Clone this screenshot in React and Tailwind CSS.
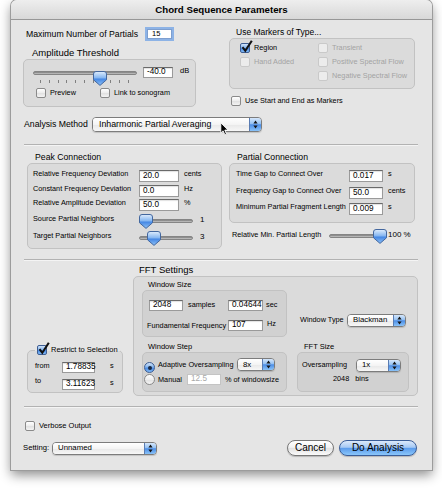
import React from 'react';

const box = 'rounded-[5px] border border-[#c2c2c2] bg-[rgba(0,0,0,0.045)]';
const small = 'text-[7.3px] leading-none whitespace-nowrap';

function Check({ on, dis }) {
  return (
    <span
      className={`relative inline-block w-[10px] h-[10px] shrink-0 rounded-[2px] border ${
        dis
          ? 'border-[#c9c9c9] bg-[#ececec]'
          : on
          ? 'border-[#3d5d92] bg-[linear-gradient(to_bottom,#d2e4fa,#86b6ef_45%,#4b8be4_55%,#7fb8f4)]'
          : 'border-[#8a8a8a] bg-[linear-gradient(to_bottom,#ffffff,#ececec_50%,#e0e0e0_51%,#f4f4f4)]'
      }`}
    >
      {on && (
        <svg className="absolute -top-[4px] left-[0px]" width="12" height="13" viewBox="0 0 12 13">
          <path d="M1.5 7.2 L4.3 10.8 L10.8 0.8" fill="none" stroke="#111" strokeWidth="2.1" />
        </svg>
      )}
    </span>
  );
}

function Radio({ on }) {
  return (
    <span
      className={`inline-flex items-center justify-center w-[11px] h-[11px] shrink-0 rounded-full border ${
        on
          ? 'border-[#3d5d92] bg-[linear-gradient(to_bottom,#d2e4fa,#86b6ef_45%,#4b8be4_55%,#7fb8f4)]'
          : 'border-[#8a8a8a] bg-[linear-gradient(to_bottom,#ffffff,#ececec_50%,#e0e0e0_51%,#f4f4f4)]'
      }`}
    >
      {on && <span className="w-[4px] h-[4px] rounded-full bg-[#1b2a44]" />}
    </span>
  );
}

function Field({ v, w, h, dis }) {
  return (
    <div
      className={`${w} ${h || 'h-[11px]'} shrink-0 flex items-center pl-[3px] bg-white border text-[8.2px] leading-none ${
        dis ? 'border-[#c4c4c4] text-[#a9a9a9]' : 'border-[#9a9a9a] border-t-[#6a6a6a] text-black shadow-[inset_0_1px_1px_rgba(0,0,0,0.12)]'
      }`}
    >
      {v}
    </div>
  );
}

function Popup({ w, label, tall }) {
  return (
    <div
      className={`${w} ${tall ? 'h-[15px]' : 'h-[13px]'} shrink-0 flex rounded-[4px] border border-[#7c7c7c] overflow-hidden shadow-[0_1px_1px_rgba(0,0,0,0.15)]`}
    >
      <div
        className={`flex-1 flex items-center leading-none bg-[linear-gradient(to_bottom,#ffffff,#f4f4f4_50%,#e8e8e8_51%,#f7f7f7)] ${
          tall ? 'pl-[6px] text-[8.8px]' : 'pl-[5px] text-[7.8px]'
        }`}
      >
        {label}
      </div>
      <div className="w-[12px] flex items-center justify-center border-l border-[#5a7cb2] bg-[linear-gradient(to_bottom,#d6e7fb,#92c0f3_45%,#4c8de6_52%,#8ac3f8)]">
        <svg width="5" height="9" viewBox="0 0 5 9">
          <path d="M2.5 0.6L4.6 3.5H0.4Z M2.5 8.4L4.6 5.5H0.4Z" fill="#151515" />
        </svg>
      </div>
    </div>
  );
}

function Thumb({ pos }) {
  return (
    <svg className={`absolute top-0 ${pos}`} width="14" height="15" viewBox="0 0 14 15">
      <defs>
        <linearGradient id="thumbG" x1="0" y1="0" x2="0" y2="1">
          <stop offset="0" stopColor="#e0edfc" />
          <stop offset="0.45" stopColor="#86b7f1" />
          <stop offset="0.55" stopColor="#4688e4" />
          <stop offset="1" stopColor="#8fc2f6" />
        </linearGradient>
      </defs>
      <path d="M3 0.5 H11 Q13.5 0.5 13.5 3 V8.8 L7 14.4 L0.5 8.8 V3 Q0.5 0.5 3 0.5Z" fill="url(#thumbG)" stroke="#43679e" />
    </svg>
  );
}

function Slider({ w, pos }) {
  return (
    <div className={`relative ${w} h-[15px] shrink-0`}>
      <div className="mt-[5px] h-[4px] rounded-full border border-[#858585] bg-[linear-gradient(to_bottom,#7a7a7a,#c9c9c9)]" />
      <Thumb pos={pos} />
    </div>
  );
}

function CheckRow({ label, on, dis, text }) {
  return (
    <div className="flex items-center h-full">
      <Check on={on} dis={dis} />
      <span className={`ml-[4px] ${text || 'text-[7.3px]'} leading-none whitespace-nowrap ${dis ? 'text-[#a3a3a3]' : 'text-black'}`}>{label}</span>
    </div>
  );
}

function Sep({ mt }) {
  return <div className={`${mt} ml-[13px] w-[394px] h-[2px] border-t border-t-[#b2b2b2] border-b border-b-[#f4f4f4]`} />;
}

function FieldRow({ label, v, unit, lw, fw, h }) {
  return (
    <div className={`${h} flex items-center`}>
      <span className={`${lw} ${small} mb-[5px]`}>{label}</span>
      <Field v={v} w={fw} h="h-[12px]" />
      <span className={`ml-[5px] ${small} mb-[5px]`}>{unit}</span>
    </div>
  );
}

export default function App() {
  return (
    <div className="w-[442px] h-[488px] bg-white overflow-hidden font-['Liberation_Sans',Arial,sans-serif] text-black">
      <div className="ml-[11px] w-[421px] h-[470px] flex flex-col bg-[#e5e5e5] rounded-t-[6px] shadow-[0_0_0_1px_#9c9c9c,0_5px_12px_rgba(0,0,0,0.45)]">
        {/* title */}
        <div className="h-[20px] shrink-0 rounded-t-[6px] bg-[linear-gradient(to_bottom,#eeeeee,#d8d8d8)] border-b border-[#979797] flex items-center justify-center text-[9.7px] font-bold leading-none">
          Chord Sequence Parameters
        </div>

        {/* top section */}
        <div className="h-[97px] shrink-0 flex">
          <div className="ml-[12px] w-[173px] flex flex-col">
            <div className="mt-[7px] h-[14px] flex items-center">
              <span className="ml-[3px] w-[121px] text-[8.7px] leading-none">Maximum Number of Partials</span>
              <div className="w-[25px] h-[10px] flex items-center pl-[4px] bg-white border border-[#7e9fcf] ring-2 ring-[#8db3e6] text-[7.5px] leading-none">15</div>
            </div>
            <div className="mt-[6px] h-[12px] flex items-center pl-[9px] text-[9.5px] leading-none">Amplitude Threshold</div>
            <div className={`h-[48px] ${box} flex flex-col pt-[6px]`}>
              <div className="h-[14px] flex items-start">
                <div className="ml-[9px]">
                  <Slider w="w-[104px]" pos="left-[60px]" />
                </div>
                <div className="ml-[6px] mt-[1px]">
                  <Field v="-40.0" w="w-[30px]" />
                </div>
                <span className="ml-[7px] mt-[1px] text-[7.5px] leading-none">dB</span>
              </div>
              <div className="h-[3px] ml-[16px] w-[89px] flex justify-between">
                {Array.from({ length: 11 }).map((_, i) => (
                  <span key={i} className="w-px h-[3px] bg-[#808080]" />
                ))}
              </div>
              <div className="mt-[4px] h-[11px] flex">
                <div className="ml-[12px] w-[64px]">
                  <CheckRow label="Preview" />
                </div>
                <CheckRow label="Link to sonogram" />
              </div>
            </div>
          </div>

          <div className="ml-[33px] w-[186px] flex flex-col">
            <div className="mt-[7px] h-[11px] flex items-center pl-[7px] text-[8.5px] leading-none">Use Markers of Type...</div>
            <div className={`h-[51px] ${box} flex pt-[2px]`}>
              <div className="ml-[10px] w-[78px] flex flex-col">
                <div className="h-[14px]">
                  <CheckRow label="Region" on />
                </div>
                <div className="h-[14px]">
                  <CheckRow label="Hand Added" dis />
                </div>
              </div>
              <div className="flex flex-col">
                <div className="h-[14px]">
                  <CheckRow label="Transient" dis />
                </div>
                <div className="h-[14px]">
                  <CheckRow label="Positive Spectral Flow" dis />
                </div>
                <div className="h-[14px]">
                  <CheckRow label="Negative Spectral Flow" dis />
                </div>
              </div>
            </div>
            <div className="mt-[6px] h-[11px] ml-[2px]">
              <CheckRow label="Use Start and End as Markers" />
            </div>
          </div>
        </div>

        {/* analysis method */}
        <div className="h-[14px] shrink-0 flex items-center">
          <span className="ml-[13px] w-[68px] text-[8.7px] leading-none">Analysis Method</span>
          <div className="relative">
            <Popup w="w-[170px]" label="Inharmonic Partial Averaging" tall />
            <svg className="absolute left-[128px] top-[5px]" width="9" height="14" viewBox="0 0 9 14">
              <path d="M0.8 0.8V11L3.1 8.8L4.9 12.9L6.5 12.2L4.8 8.1H8Z" fill="#000" stroke="#fff" strokeWidth="0.9" />
            </svg>
          </div>
        </div>

        <Sep mt="mt-[13px]" />

        {/* peak / partial connection */}
        <div className="mt-[6px] shrink-0 flex">
          <div className="ml-[16px] w-[195px] flex flex-col">
            <div className="h-[11px] flex items-center pl-[8px] text-[8.7px] leading-none">Peak Connection</div>
            <div className={`h-[86px] ${box} pt-[5px] flex flex-col`}>
              <FieldRow h="h-[14.5px]" lw="w-[111px] pl-[5px]" fw="w-[40px]" label="Relative Frequency Deviation" v="20.0" unit="cents" />
              <FieldRow h="h-[14.5px]" lw="w-[111px] pl-[5px]" fw="w-[40px]" label="Constant Frequency Deviation" v="0.0" unit="Hz" />
              <FieldRow h="h-[14.5px]" lw="w-[111px] pl-[5px]" fw="w-[40px]" label="Relative Amplitude Deviation" v="50.0" unit="%" />
              <div className="h-[17px] flex items-center">
                <span className={`w-[111px] pl-[5px] ${small} mb-[4px]`}>Source Partial Neighbors</span>
                <Slider w="w-[54px]" pos="left-[0px]" />
                <span className="ml-[7px] text-[8px] leading-none mb-[2px]">1</span>
              </div>
              <div className="h-[17px] flex items-center">
                <span className={`w-[111px] pl-[5px] ${small} mb-[4px]`}>Target Partial Neighbors</span>
                <Slider w="w-[54px]" pos="left-[8px]" />
                <span className="ml-[7px] text-[8px] leading-none mb-[2px]">3</span>
              </div>
            </div>
          </div>

          <div className="ml-[7px] w-[186px] flex flex-col">
            <div className="h-[11px] flex items-center pl-[8px] text-[8.7px] leading-none">Partial Connection</div>
            <div className={`h-[60px] ${box} pt-[4px] flex flex-col`}>
              <FieldRow h="h-[16.5px]" lw="w-[119px] pl-[6px]" fw="w-[34px]" label="Time Gap to Connect Over" v="0.017" unit="s" />
              <FieldRow h="h-[16.5px]" lw="w-[119px] pl-[6px]" fw="w-[34px]" label="Frequency Gap to Connect Over" v="50.0" unit="cents" />
              <FieldRow h="h-[16.5px]" lw="w-[119px] pl-[6px]" fw="w-[34px]" label="Minimum Partial Fragment Length" v="0.009" unit="s" />
            </div>
            <div className="mt-[5px] h-[17px] flex items-center">
              <span className={`w-[100px] pl-[3px] ${small} mb-[3px]`}>Relative Min. Partial Length</span>
              <Slider w="w-[57px]" pos="left-[44px]" />
              <span className="ml-[2px] text-[8px] leading-none mb-[3px] whitespace-nowrap">100 %</span>
            </div>
          </div>
        </div>

        <Sep mt="mt-[10px]" />

        {/* FFT + restrict */}
        <div className="shrink-0 flex">
          <div className="ml-[16px] w-[96px]">
            <div className={`relative mt-[89px] h-[43px] ${box} pt-[10px] flex flex-col`}>
              <div className="absolute -top-[7px] left-[7px] h-[12px] px-[2px] bg-[linear-gradient(to_bottom,#e5e5e5_55%,transparent_55%)]">
                <CheckRow label="Restrict to Selection" on text="text-[7.5px]" />
              </div>
              <div className="h-[12px] flex items-center">
                <span className={`w-[34px] pl-[7px] ${small} mb-[3px]`}>from</span>
                <Field v="1.78835" w="w-[33px]" />
                <span className={`ml-[15px] ${small} mb-[3px]`}>s</span>
              </div>
              <div className="mt-[5px] h-[12px] flex items-center">
                <span className={`w-[34px] pl-[7px] ${small} mb-[6px]`}>to</span>
                <Field v="3.11623" w="w-[33px]" />
                <span className={`ml-[15px] ${small} mb-[3px]`}>s</span>
              </div>
            </div>
          </div>

          <div className="ml-[10px] w-[285px] flex flex-col">
            <div className="mt-[3px] h-[12px] flex items-center pl-[6px] text-[9.5px] leading-none">FFT Settings</div>
            <div className={`h-[120px] ${box} flex`}>
              <div className="ml-[8px] w-[145px] flex flex-col">
                <div className="mt-[2px] h-[11px] flex items-center pl-[6px] text-[7.5px] leading-none">Window Size</div>
                <div className={`h-[47px] ${box} pt-[8px] flex flex-col`}>
                  <div className="h-[13px] flex items-center">
                    <div className="ml-[6px]">
                      <Field v="2048" w="w-[34px]" />
                    </div>
                    <span className={`w-[45px] pl-[5px] ${small} mb-[2px]`}>samples</span>
                    <Field v="0.04644" w="w-[35px]" />
                    <span className={`pl-[3px] ${small} mb-[2px]`}>sec</span>
                  </div>
                  <div className="mt-[7px] h-[13px] flex items-center">
                    <span className={`w-[85px] pl-[4px] ${small}`}>Fundamental Frequency</span>
                    <Field v="107" w="w-[35px]" />
                    <span className={`pl-[4px] ${small} mb-[4px]`}>Hz</span>
                  </div>
                </div>
                <div className="mt-[4px] h-[11px] flex items-center pl-[6px] text-[7.5px] leading-none">Window Step</div>
                <div className={`h-[40px] ${box} pt-[5px] flex flex-col`}>
                  <div className="h-[13px] flex items-center">
                    <div className="ml-[1px]">
                      <Radio on />
                    </div>
                    <span className={`ml-[3px] w-[79px] ${small}`}>Adaptive Oversampling</span>
                    <Popup w="w-[38px]" label="8x" />
                  </div>
                  <div className="mt-[2px] h-[13px] flex items-center">
                    <div className="ml-[1px]">
                      <Radio />
                    </div>
                    <span className={`ml-[3px] w-[29px] ${small}`}>Manual</span>
                    <Field v="12.5" w="w-[34px]" dis />
                    <span className={`pl-[4px] ${small}`}>% of windowsize</span>
                  </div>
                </div>
              </div>

              <div className="ml-[10px] w-[112px] flex flex-col">
                <div className="mt-[35px] h-[16px] flex items-center">
                  <span className={`w-[50px] pl-[3px] ${small}`}>Window Type</span>
                  <Popup w="w-[59px]" label="Blackman" />
                </div>
                <div className="mt-[13px] h-[11px] flex items-center pl-[7px] text-[7.5px] leading-none">FFT Size</div>
                <div className={`h-[40px] ${box} pt-[6px] flex flex-col`}>
                  <div className="h-[12px] flex items-center">
                    <span className={`w-[58px] pl-[4px] ${small}`}>Oversampling</span>
                    <Popup w="w-[45px]" label="1x" />
                  </div>
                  <div className="mt-[2px] h-[12px] flex items-center pl-[35px] gap-[6px]">
                    <span className={small}>2048</span>
                    <span className={small}>bins</span>
                  </div>
                </div>
              </div>
            </div>
          </div>
        </div>

        <Sep mt="mt-[10px]" />

        <div className="mt-[12px] h-[11px] shrink-0 ml-[14px]">
          <CheckRow label="Verbose Output" text="text-[7.5px]" />
        </div>

        <div className="mt-[9px] h-[16px] shrink-0 flex items-center">
          <span className="ml-[12px] w-[29px] text-[7.7px] leading-none">Setting:</span>
          <Popup w="w-[105px]" label="Unnamed" />
          <div className="flex-1" />
          <button className="w-[47px] h-[16px] rounded-full border border-[#777777] bg-[linear-gradient(to_bottom,#ffffff,#f3f3f3_45%,#e2e2e2_52%,#fafafa)] text-[10px] leading-none shadow-[0_1px_1px_rgba(0,0,0,0.2)]">
            Cancel
          </button>
          <button className="ml-[5px] mr-[15px] w-[78px] h-[16px] rounded-full border border-[#3a5d98] bg-[linear-gradient(to_bottom,#dbe9fb,#a6c9f4_45%,#5c9cec_52%,#8ac6fa)] text-[10px] leading-none shadow-[0_1px_1px_rgba(0,0,0,0.2)]">
            Do Analysis
          </button>
        </div>
      </div>
    </div>
  );
}
